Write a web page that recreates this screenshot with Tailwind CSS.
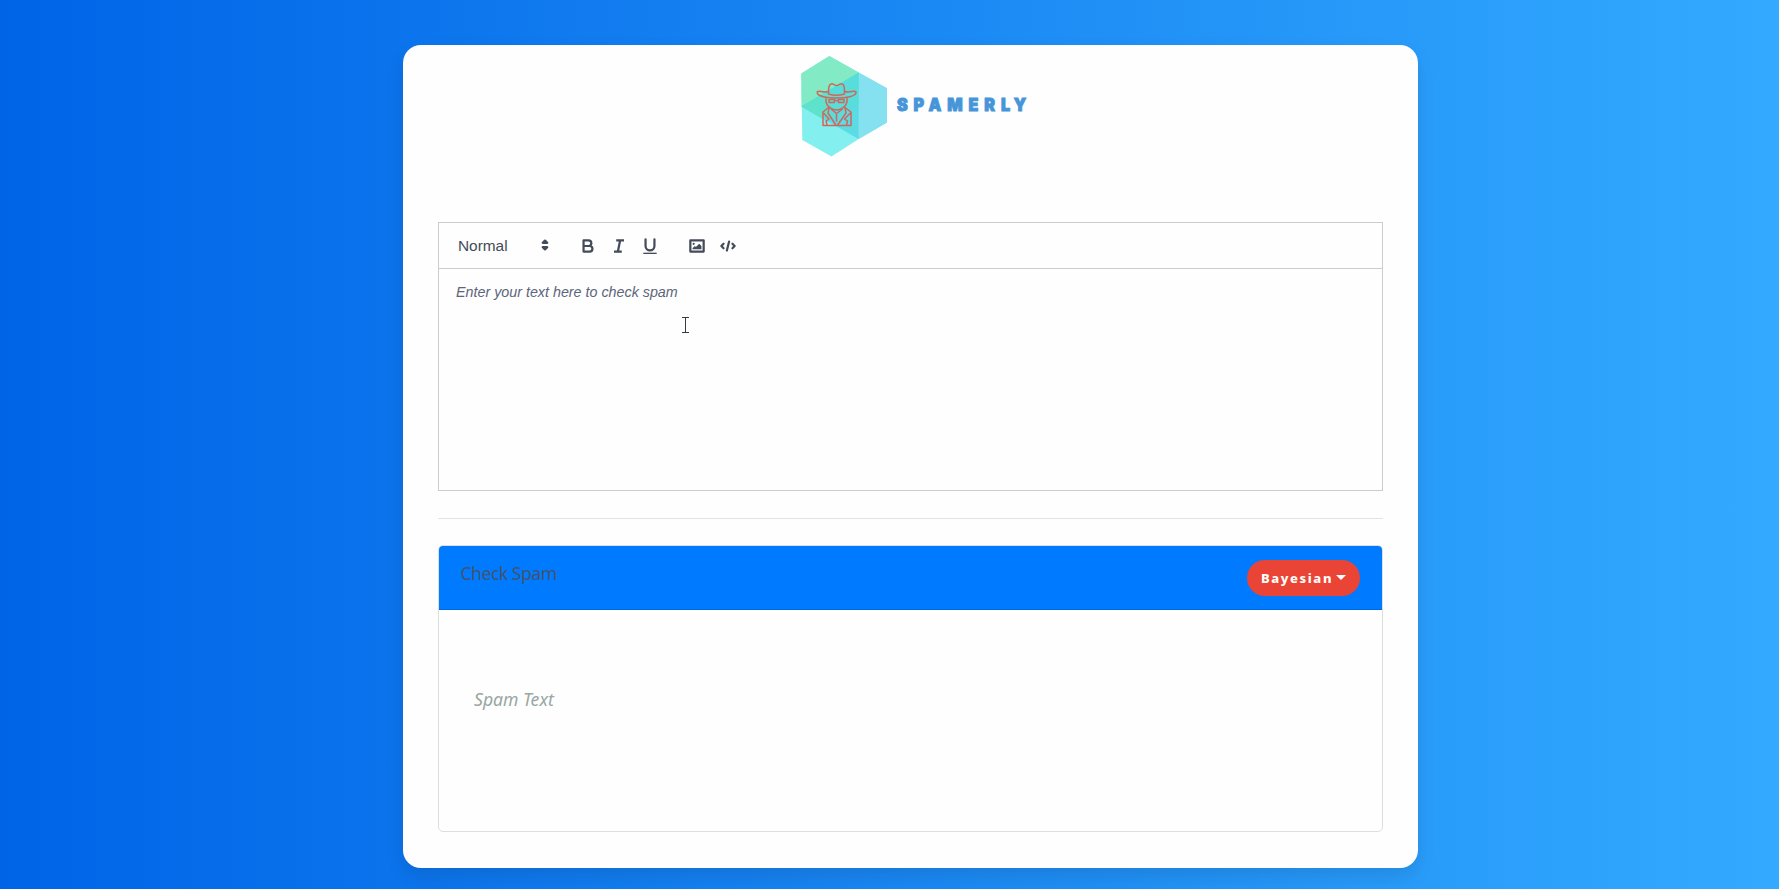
<!DOCTYPE html>
<html lang="en">
<head>
<meta charset="utf-8">
<title>Spamerly</title>
<script src="https://cdn.jsdelivr.net/npm/@tailwindcss/browser@4"></script>
</head>
<body class="h-[889px] overflow-hidden bg-linear-to-r/srgb from-[#0064e7] to-[#33aaff] pl-[403px] pt-[45px]">
<main class="flex h-[823px] w-[1015px] flex-col rounded-[18px] bg-[#fefefe] px-[35px] shadow-[0_9px_18px_rgba(0,0,0,0.1)]">
  <header class="flex h-[177px] justify-center pr-[2px]">
    <svg class="h-[120px] w-[240px]" viewBox="790 45 240 120" role="img" aria-label="Spamerly">
      <path d="M829.3 56 858.7 72.5 887 88.3V122.5L858.7 139 831.5 156.5 802.3 140 801.3 73.500Z" fill="#83efef"/>
      <path d="M829.3 56 858.7 72.5 801.500 106.500 801.300 73.500Z" fill="#82ebc6"/>
      <path d="M858.7 72.500 887 88.300V122.500L858.700 139Z" fill="#85e1f0"/>
      <path d="M858.700 72.500V139L801.500 106.500Z" fill="#5bdbe3"/>
      <path d="M858.700 72.500 801.500 106.500 828 122 858.700 104Z" fill="#57dedb"/>
      <path d="M829 90 801.500 106.500 822 118.500 829 112Z" fill="#5fe2cb"/>
      <g fill="none" stroke="#d0675b" stroke-width="1.500" stroke-linejoin="round" stroke-linecap="round">
        <path d="M828.500 94C828.500 87 829 83 833 84Q836.500 87 840 84C844.500 83 844.500 87 844.500 94Q836.500 96.500 828.500 94"/>
        <path d="M828 91.500C823 93.500 819 89.500 817.200 92C816.500 96.500 828 98 836.500 98S857 96.500 856 92C854 89.500 850 93.500 845 91.500"/>
        <path d="M826 98.500V102C827 107 833 110 836.500 110S846 107 847 102V98.500M829 99.500V102.500H834.500V99.500ZM838.500 99.500V102.500H844V99.500ZM834.500 100.500H838.500"/>
        <path d="M828.500 107.500 823 112V125.500H851V112L845 107.500M829 108 828 113 835.500 124.500M845 108 846 113 838 124.500M831.500 109.500 836.500 113.500 842 109.500M836.500 113.500V121M823.500 113 829 119 826 121 827 125M850.500 113 844.500 119 847.500 121 846.500 125"/>
      </g>
      <text transform="translate(897 111) scale(.92 1)" textLength="140.500" lengthAdjust="spacing" font-family="Inter, sans-serif" font-size="17.500" font-weight="900" fill="#4695d9" stroke="#4695d9" stroke-width="1">SPAMERLY</text>
    </svg>
  </header>

  <section class="flex h-[269px] w-[945px] shrink-0 flex-col border border-[#ccc] font-['Liberation_Sans',sans-serif] text-[#444c5a]">
    <div class="flex h-[46px] shrink-0 items-center border-b border-[#ccc] pl-[19px]">
      <div class="flex w-[97px] items-center justify-between">
        <span class="text-[15.4px]">Normal</span>
        <svg class="size-[20px] fill-[#444c5a] stroke-[#444c5a] stroke-2" stroke-linejoin="round" viewBox="0 0 18 18"><path d="M7 11 9 13 11 11ZM7 7 9 5 11 7Z"/></svg>
      </div>
      <div class="ml-[23px] flex gap-[11px] fill-none stroke-[#444c5a] stroke-2">
        <svg class="size-[20px]" stroke-linejoin="round" viewBox="0 0 18 18"><path d="M5 4H9.500A2.500 2.500 0 0 1 9.500 9H5ZM5 9H10.500A2.500 2.500 0 0 1 10.500 14H5Z"/></svg>
        <svg class="size-[20px]" viewBox="0 0 18 18"><path d="M6.500 4H13.500M4.500 14H11.500M8 14 10 4"/></svg>
        <svg class="size-[20px]" stroke-linecap="round" viewBox="0 0 18 18"><path d="M5 3V9A4 4 0 0 0 13 9V3"/><rect x="3" y="15" width="12" height="1.200" fill="#444c5a" stroke="none"/></svg>
      </div>
      <div class="ml-[27px] flex gap-[11px] fill-none stroke-[#444c5a] stroke-2">
        <svg class="size-[20px]" stroke-linejoin="round" viewBox="0 0 18 18"><rect x="3" y="4" width="12" height="10"/><g fill="#444c5a" stroke="none"><circle cx="6" cy="7" r="1"/><path d="M5 12V11L7 9 8 10 11 7 13 9V12Z"/></g></svg>
        <svg class="size-[20px]" stroke-linecap="round" stroke-linejoin="round" viewBox="0 0 18 18"><path d="M5 7 3 9 5 11M13 7 15 9 13 11M10 5 8 13"/></svg>
      </div>
    </div>
    <div class="relative grow pl-[17px] pt-[13px]">
      <p class="text-[14.300px] leading-[20px] italic text-[#5c6579]">Enter your text here to check spam</p>
      <svg class="absolute left-[242px] top-[47px] h-[18px] w-[9px] fill-none stroke-[#333b46]" viewBox="0 0 9 18"><path d="M1 1.500H8M1 16.500H8M4.500 1.500V16.500"/></svg>
    </div>
  </section>

  <hr class="mt-[27px] w-full border-t border-[#e4e4e4]">

  <section class="mt-[26px] h-[287px] w-full shrink-0 overflow-hidden rounded-[5px] border border-[#dcdfe0] font-['Noto_Sans',sans-serif]">
    <div class="flex h-[64px] justify-between border-b border-[#0069e0] bg-[#007bff] pl-[21.500px] pr-[22px]">
      <h2 class="pt-[14px] text-[17.600px] leading-[26px] tracking-[-0.500px] text-[#415470]">Check Spam</h2>
      <button class="mt-[14px] flex h-[36px] w-[113px] items-center justify-center gap-[3px] rounded-full bg-[#e94435] pt-px text-[13px] font-extrabold tracking-[1.600px] text-[#fffdf8]">Bayesian<span class="mb-[3px] border-x-[5px] border-t-[5px] border-x-transparent border-t-white"></span></button>
    </div>
    <p class="pl-[35px] pt-[76px] text-[17.600px] leading-[26px] italic text-[#98a7a2]">Spam Text</p>
  </section>
</main>
</body>
</html>
